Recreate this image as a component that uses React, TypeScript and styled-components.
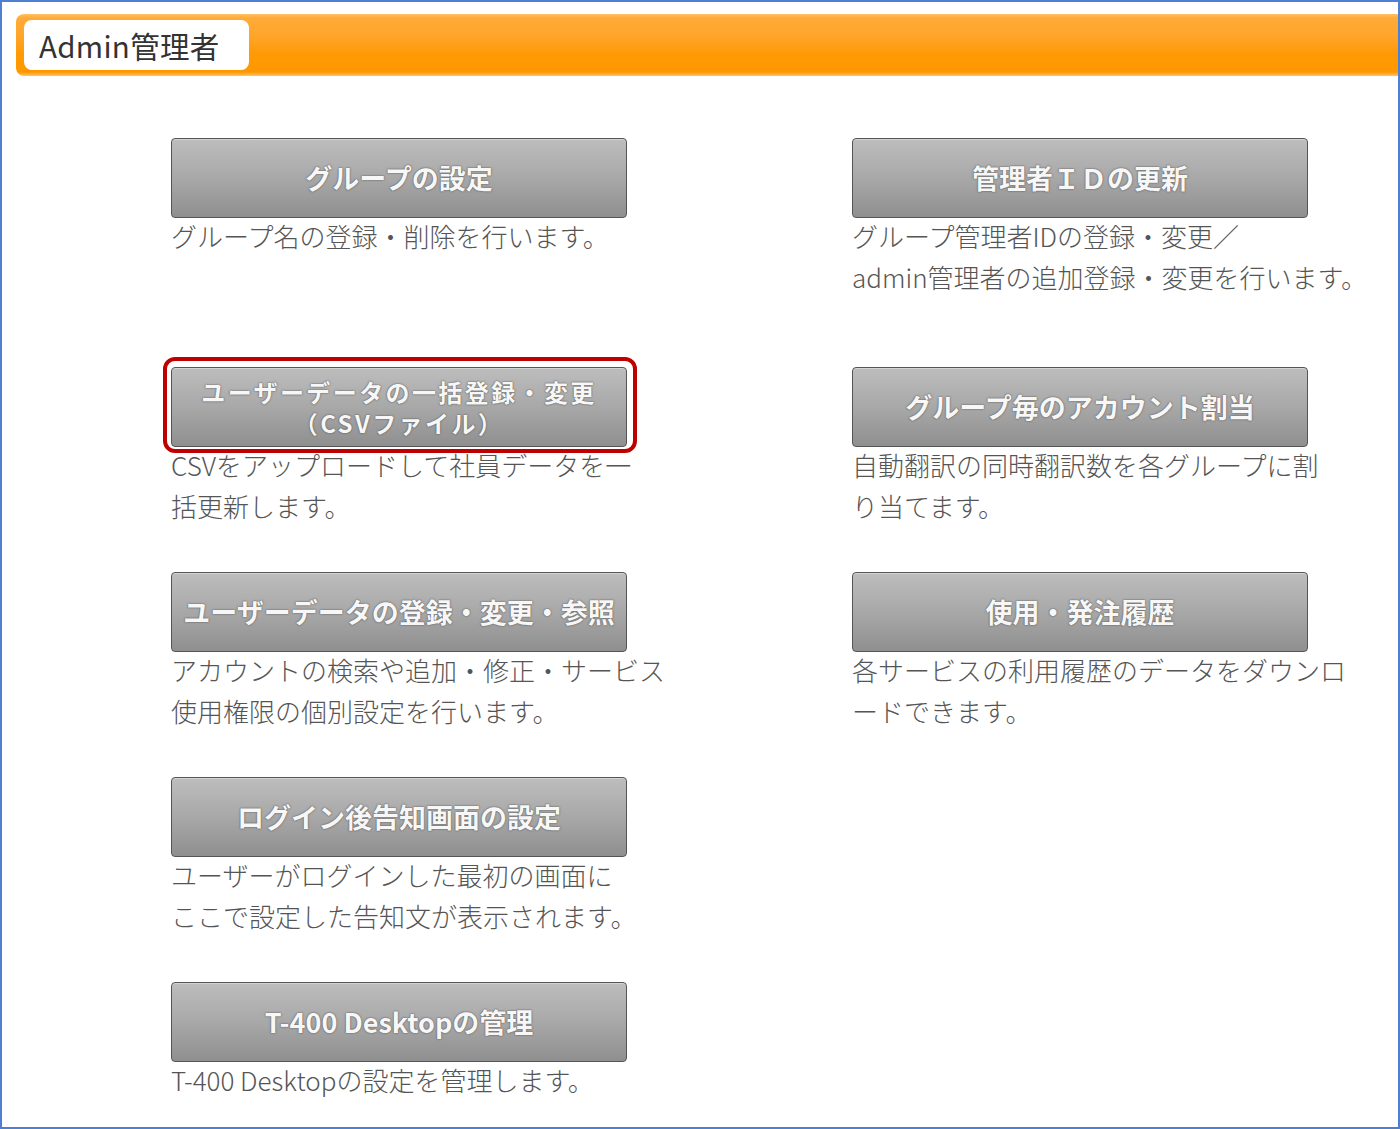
import React from "react";
import styled, { createGlobalStyle } from "styled-components";

const GlobalStyle = createGlobalStyle`
  html, body {
    margin: 0;
    padding: 0;
    background: #ffffff;
  }
  * {
    box-sizing: border-box;
  }
`;

type Item = {
  title: string[];
  desc: string[];
  highlight?: boolean;
};

const rows: (Item | null)[][] = [
  [
    { title: ["グループの設定"], desc: ["グループ名の登録・削除を行います。"] },
    {
      title: ["管理者ＩＤの更新"],
      desc: ["グループ管理者IDの登録・変更／", "admin管理者の追加登録・変更を行います。"],
    },
  ],
  [
    {
      title: ["ユーザーデータの一括登録・変更", "（CSVファイル）"],
      desc: ["CSVをアップロードして社員データを一", "括更新します。"],
      highlight: true,
    },
    {
      title: ["グループ毎のアカウント割当"],
      desc: ["自動翻訳の同時翻訳数を各グループに割", "り当てます。"],
    },
  ],
  [
    {
      title: ["ユーザーデータの登録・変更・参照"],
      desc: ["アカウントの検索や追加・修正・サービス", "使用権限の個別設定を行います。"],
    },
    {
      title: ["使用・発注履歴"],
      desc: ["各サービスの利用履歴のデータをダウンロ", "ードできます。"],
    },
  ],
  [
    {
      title: ["ログイン後告知画面の設定"],
      desc: ["ユーザーがログインした最初の画面に", "ここで設定した告知文が表示されます。"],
    },
    null,
  ],
  [
    { title: ["T-400 Desktopの管理"], desc: ["T-400 Desktopの設定を管理します。"] },
    null,
  ],
];

const MenuCard = ({ item }: { item: Item }) => {
  const multi = item.title.length > 1;
  return (
    <Card>
      <ButtonWrap>
        <MenuButton $multi={multi}>
          {item.title.map((t) => (
            <TitleLine key={t} $multi={multi}>
              {t}
            </TitleLine>
          ))}
        </MenuButton>
        {item.highlight && <Highlight />}
      </ButtonWrap>
      <Desc>
        {item.desc.map((d) => (
          <span key={d}>{d}</span>
        ))}
      </Desc>
    </Card>
  );
};

export default function App() {
  return (
    <>
      <GlobalStyle />
      <Frame>
        <Header>
          <TitleTab>Admin管理者</TitleTab>
        </Header>
        <Grid>
          {rows.map((row, ri) => (
            <Row key={ri} $first={ri === 0}>
              {row.map((item, ci) =>
                item ? <MenuCard key={ci} item={item} /> : <div key={ci} />
              )}
            </Row>
          ))}
        </Grid>
      </Frame>
    </>
  );
}

const Frame = styled.div`
  width: 1400px;
  height: 1129px;
  border: 2px solid #4f7fd3;
  padding: 12px 0 0 14px;
  overflow: hidden;
  font-family: "Noto Sans CJK JP", "Noto Sans", sans-serif;
`;

const Header = styled.div`
  height: 62px;
  border-radius: 8px 0 0 8px;
  background: linear-gradient(
    to bottom,
    #ffc067 0px,
    #ffab38 4px,
    #ffa52a 22px,
    #ff9a06 40px,
    #ff9800 58px,
    #ffc36e 62px
  );
  padding: 6px 0 0 8px;
`;

const TitleTab = styled.div`
  width: 225px;
  height: 50px;
  background: #ffffff;
  border-radius: 8px;
  padding-left: 15px;
  font-size: 29.5px;
  line-height: 50px;
  color: #333333;
  letter-spacing: 0.3px;
`;

const Grid = styled.div`
  display: flex;
  flex-direction: column;
  gap: 46px;
  padding: 62px 0 0 155px;
`;

const Row = styled.div<{ $first: boolean }>`
  display: grid;
  grid-template-columns: 681px 1fr;
  margin-bottom: ${({ $first }) => ($first ? "24px" : "0")};
`;

const Card = styled.div`
  display: flex;
  flex-direction: column;
`;

const ButtonWrap = styled.div`
  position: relative;
  width: 456px;
`;

const MenuButton = styled.div<{ $multi: boolean }>`
  width: 456px;
  height: 80px;
  border: 1.5px solid #555555;
  border-radius: 4px;
  background: linear-gradient(to bottom, #bdbdbd 0%, #a8a8a8 50%, #8f8f8f 100%);
  box-shadow: inset 0 1px 0 rgba(255, 255, 255, 0.35);
  display: flex;
  flex-direction: column;
  align-items: center;
  justify-content: center;
  gap: ${({ $multi }) => ($multi ? "1px" : "0")};
  color: #f7f7f7;
  font-weight: 700;
  text-shadow: 0 0 2px rgba(70, 70, 70, 0.8), 0 0 1px rgba(70, 70, 70, 0.6);
  white-space: nowrap;
`;

const TitleLine = styled.span<{ $multi: boolean }>`
  display: block;
  font-size: ${({ $multi }) => ($multi ? "24px" : "27px")};
  line-height: ${({ $multi }) => ($multi ? "30px" : "34px")};
  height: ${({ $multi }) => ($multi ? "30px" : "34px")};
  letter-spacing: ${({ $multi }) => ($multi ? "2.4px" : "0")};
`;

const Highlight = styled.div`
  position: absolute;
  top: -10px;
  bottom: -6px;
  left: -8px;
  right: -10px;
  border: 4px solid #c00000;
  border-radius: 12px;
  pointer-events: none;
`;

const Desc = styled.div`
  display: flex;
  flex-direction: column;
  margin-top: -3px;
  font-size: 26px;
  line-height: 41px;
  color: #555555;
  font-weight: 300;
  white-space: nowrap;
`;
